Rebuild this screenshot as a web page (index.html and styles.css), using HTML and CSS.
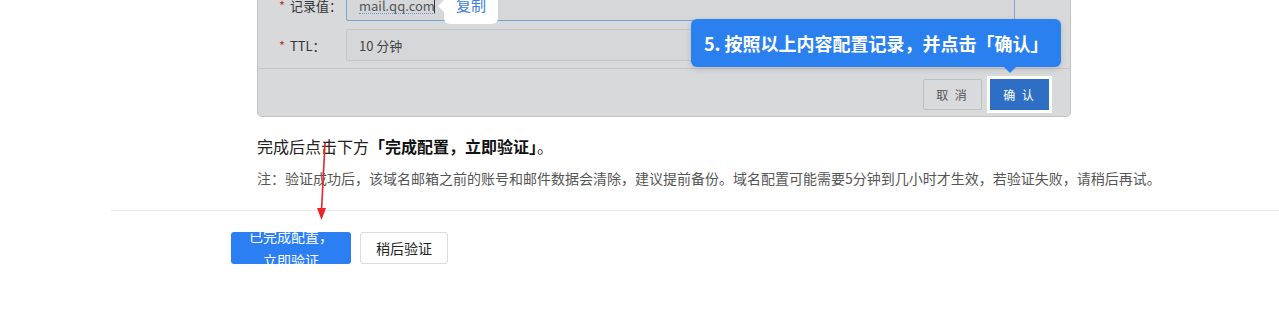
FILE: index.html
```html
<!DOCTYPE html>
<html lang="zh-CN">
<head>
<meta charset="utf-8">
<title>配置域名邮箱</title>
<link rel="stylesheet" href="styles.css">
</head>
<body>
<div class="page">
  <div class="guide">
    <div class="shot">
      <div class="form">
        <div class="row">
          <span class="label"><i>*</i> 记录值：</span>
          <div class="input focus"><span class="val">mail.qq.com</span><span class="caret"></span></div>
        </div>
        <div class="row">
          <span class="label"><i>*</i> TTL：</span>
          <div class="input">10 分钟</div>
        </div>
      </div>
      <div class="footer">
        <span class="btn-cancel">取 消</span>
        <span class="btn-ok">确 认</span>
      </div>
      <div class="copy-tip">复制</div>
      <div class="step-tip">5. 按照以上内容配置记录，并点击「确认」</div>
    </div>
    <p class="lead">完成后点击下方<b>「完成配置，立即验证」</b>。</p>
    <p class="note">注：验证成功后，该域名邮箱之前的账号和邮件数据会清除，建议提前备份。域名配置可能需要5分钟到几小时才生效，若验证失败，请稍后再试。</p>
  </div>
  <div class="divider"></div>
  <div class="actions">
    <button class="primary"><span>已完成配置，立即验证</span></button>
    <button class="plain">稍后验证</button>
  </div>
  <svg class="arrow" width="20" height="90" viewBox="0 0 20 90">
    <line x1="12" y1="0" x2="8.5" y2="68" stroke="#e8262b" stroke-width="1.6"/>
    <polygon points="4,65 13,65 8.5,77" fill="#e8262b"/>
  </svg>
</div>
</body>
</html>
```
FILE: styles.css
```css
* { box-sizing: border-box; }
html, body { margin: 0; padding: 0; background: #fff; }
body { font-family: "Noto Sans CJK SC", "Noto Sans", sans-serif; color: #222; }
.page { position: relative; width: 1279px; height: 321px; overflow: hidden; }

.guide { margin-left: 257px; }
.shot {
  position: relative;
  display: flow-root;
  width: 814px;
  height: 117px;
  background: #d8d9db;
  border: 1px solid #c2c3c5;
  border-top: none;
  border-radius: 0 0 5px 5px;
}
.form {
  margin-top: -11px;
  padding: 0 55px 7px 21px;
  display: flex;
  flex-direction: column;
  gap: 8px;
}
.row { display: flex; align-items: center; height: 32px; }
.label { width: 67px; font-size: 13px; color: #333; white-space: nowrap; }
.label i { font-style: normal; color: #c0392b; margin-right: 2px; }
.input {
  flex: 1;
  height: 32px;
  border: 1px solid #c6c7c9;
  border-radius: 2px;
  padding-left: 12px;
  display: flex;
  align-items: center;
  font-size: 13px;
  color: #444;
  background: #d6d7d9;
}
.input.focus { border: 1px solid #7ba3d3; padding-top: 2px; }
.val { border-bottom: 1px dotted #5d95dc; line-height: 14px; color: #555; }
.caret { width: 1px; height: 14px; background: #333; margin-left: -1px; }
.footer {
  height: 48px;
  border-top: 1px solid #c6c7c9;
  display: flex;
  justify-content: flex-end;
  align-items: center;
  gap: 8px;
  padding: 3px 21px 0 0;
}
.btn-cancel, .btn-ok {
  width: 59px;
  height: 31px;
  display: flex;
  align-items: center;
  justify-content: center;
  font-size: 12px;
  letter-spacing: 2px;
}
.btn-cancel { border: 1px solid #c0c1c3; background: #d9dadc; color: #555; border-radius: 2px; }
.btn-ok { background: #2e6fc5; color: #fff; box-shadow: 0 0 0 3px #fff; }
.copy-tip {
  position: absolute;
  left: 186px;
  top: -10px;
  width: 54px;
  height: 34px;
  padding-top: 8px;
  background: #fff;
  border-radius: 6px;
  text-align: center;
  font-size: 15px;
  color: #3a80e0;
  line-height: 14px;
}
.copy-tip::before {
  content: "";
  position: absolute;
  left: -6px;
  top: 10px;
  border: 6px solid transparent;
  border-left: none;
  border-right-color: #fff;
}
.step-tip {
  position: absolute;
  left: 433px;
  top: 19px;
  width: 370px;
  height: 48px;
  background: #2b80ef;
  border-radius: 6px;
  color: #fff;
  font-weight: bold;
  font-size: 18px;
  line-height: 48px;
  padding-left: 13px;
  white-space: nowrap;
  box-shadow: 0 2px 6px rgba(0,0,0,0.15);
}
.step-tip::after {
  content: "";
  position: absolute;
  left: 313px;
  bottom: -6px;
  border: 6px solid transparent;
  border-bottom: none;
  border-top-color: #2b80ef;
}
.lead { margin: 17px 0 0; font-size: 16px; line-height: 24px; color: #222; }
.lead b { font-weight: bold; color: #111; }
.note { margin: 10px 0 0; font-size: 14px; line-height: 20px; color: #555; }
.divider { margin: 22px 0 0 111px; height: 1px; background: #ebebeb; }
.actions { display: flex; gap: 9px; margin: 21px 0 0 231px; }
.actions button {
  height: 32px;
  border-radius: 3px;
  font-family: inherit;
  font-size: 14px;
  padding: 0;
  overflow: hidden;
}
.primary {
  width: 120px;
  background: #2b7ff3;
  border: none;
  color: #fff;
  line-height: 24px;
  display: flex;
  align-items: center;
  justify-content: center;
}
.primary span { display: block; width: 90px; text-align: center; flex-shrink: 0; }
.plain { width: 88px; background: #fff; border: 1px solid #dcdcdc; color: #222; }
.arrow { position: absolute; left: 313px; top: 143px; }
```
